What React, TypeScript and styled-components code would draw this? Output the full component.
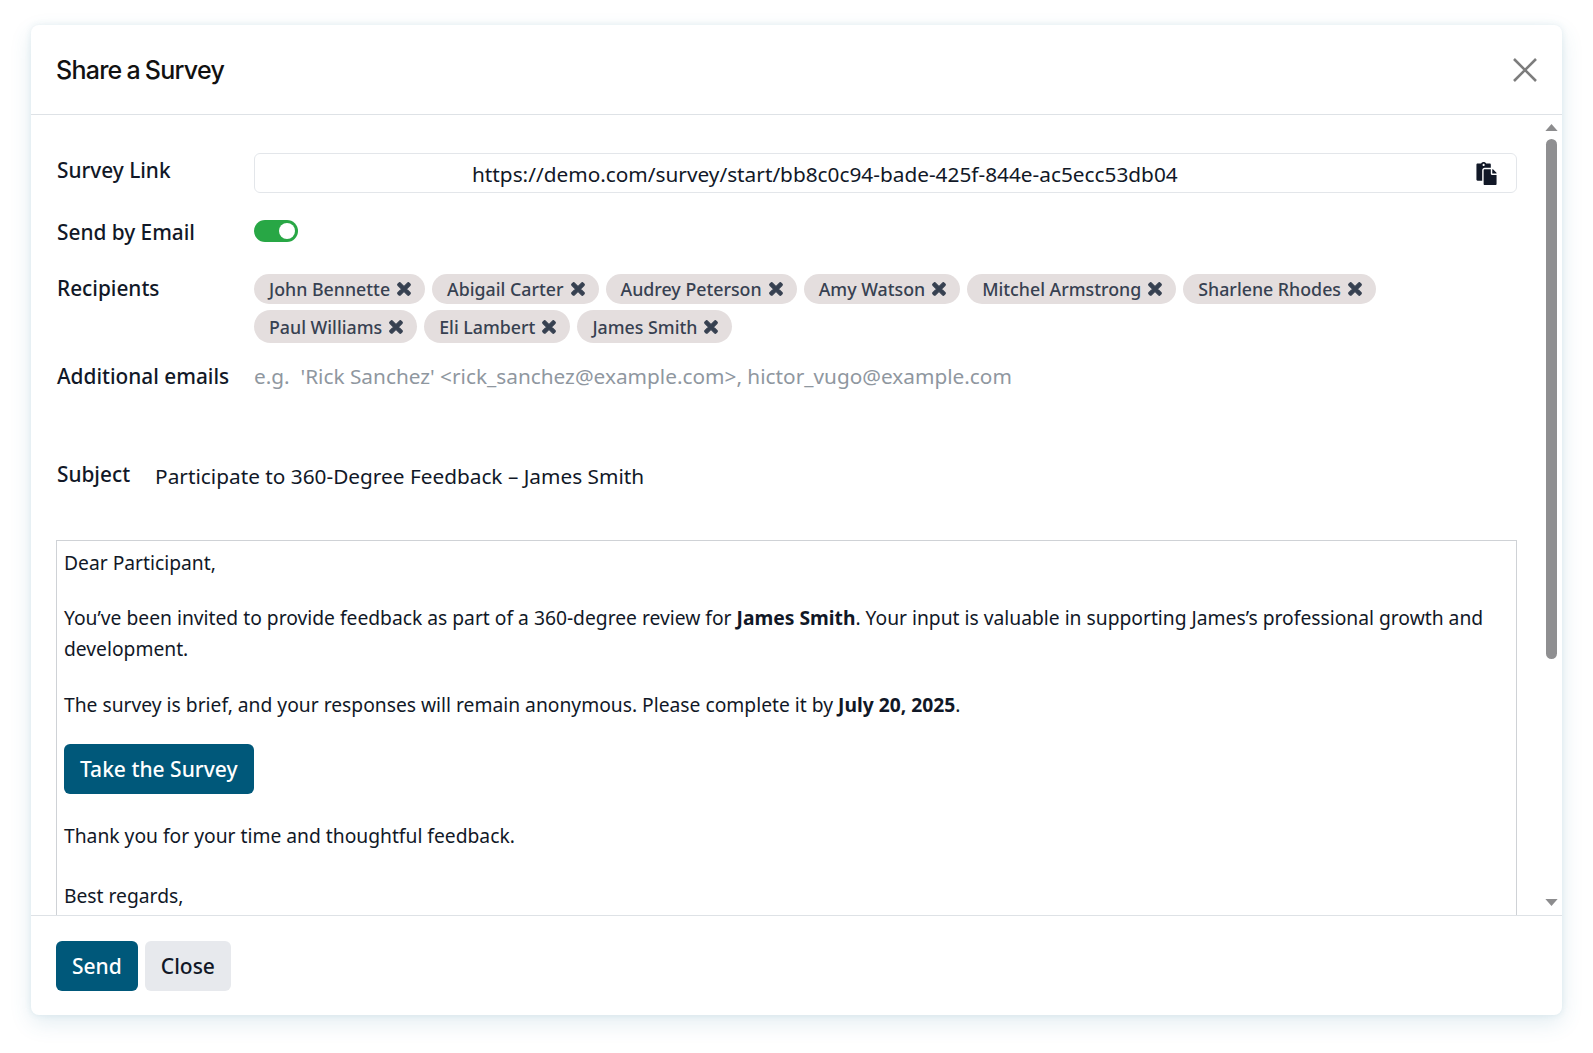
import React from "react";
import styled, { createGlobalStyle } from "styled-components";
import { FaPaste, FaTimes } from "react-icons/fa";

const Global = createGlobalStyle`
  html, body { margin: 0; padding: 0; background: #fff; }
  body { width: 1593px; height: 1053px; overflow: hidden; font-family: "Noto Sans", "Liberation Sans", sans-serif; color: #111827; }
`;

const Page = styled.div`
  box-sizing: border-box;
  width: 1593px;
  height: 1053px;
  padding: 25px 31px 38px 31px;
`;

const Dialog = styled.section`
  height: 990px;
  display: flex;
  flex-direction: column;
  background: #fff;
  border-radius: 8px;
  box-shadow: 0 8px 22px rgba(60, 130, 160, 0.14), 0 0 6px rgba(60, 130, 160, 0.12);
  overflow: hidden;
`;

const Header = styled.header`
  box-sizing: border-box;
  height: 90px;
  flex: none;
  padding: 0 25px;
  display: flex;
  align-items: center;
  justify-content: space-between;
  border-bottom: 1px solid #dee2e6;
`;

const Title = styled.h4`
  margin: 0;
  font-family: Inter, "Liberation Sans", sans-serif;
  font-size: 25px;
  font-weight: 500;
  letter-spacing: -0.75px;
  word-spacing: -1px;
  color: #111;
`;

const CloseIcon = styled.svg`
  width: 24px;
  height: 24px;
  stroke: #7d7d7d;
  stroke-width: 2.6;
  fill: none;
  display: block;
`;

const Middle = styled.div`
  flex: 1;
  min-height: 0;
  display: flex;
`;

const Content = styled.div`
  flex: 1;
  min-width: 0;
  overflow: hidden;
  padding: 38px 0 0 25px;
`;

const Rail = styled.div`
  width: 45px;
  flex: none;
  box-sizing: border-box;
  padding: 9px 5px 9px 0;
  display: flex;
  flex-direction: column;
  align-items: flex-end;
`;

const RailArrow = styled.svg`
  width: 13px;
  height: 7px;
  fill: #8c8c8e;
  display: block;
  flex: none;
  margin-right: -1px;
`;

const Thumb = styled.div`
  width: 11px;
  height: 520px;
  margin-top: 8px;
  border-radius: 6px;
  background: #8f8f91;
  flex: none;
`;

const RailSpacer = styled.div`
  flex: 1;
`;

const FormRow = styled.div<{ $h: number }>`
  display: grid;
  grid-template-columns: 198px 1fr;
  height: ${(p) => p.$h}px;
`;

const Label = styled.label<{ $drop?: number }>`
  padding: ${(p) => p.$drop ?? 0}px 0 0 1px;
  font-size: 20.8px;
  font-weight: 500;
  line-height: 30px;
  color: #111827;
  white-space: nowrap;
`;

const LinkBox = styled.div`
  box-sizing: border-box;
  height: 40px;
  border: 1px solid #e3e6ea;
  border-radius: 6px;
  display: flex;
  align-items: center;
  padding: 0 18px 0 217px;
  font-size: 20.8px;
  color: #111827;
`;

const LinkText = styled.span`
  flex: 1;
  padding-top: 2px;
`;

const Toggle = styled.div`
  position: relative;
  width: 44px;
  height: 22px;
  margin-top: 3px;
  border-radius: 11px;
  background: #28a745;
`;

const Knob = styled.span`
  position: absolute;
  right: 3px;
  top: 3px;
  width: 16px;
  height: 16px;
  border-radius: 50%;
  background: #fff;
`;

const Chips = styled.div`
  display: flex;
  flex-wrap: wrap;
  align-content: flex-start;
  gap: 6px 7px;
  margin-top: 1px;
`;

const Chip = styled.span<{ $tall?: boolean }>`
  display: inline-flex;
  align-items: center;
  gap: 7px;
  height: ${(p) => (p.$tall ? 33 : 30)}px;
  padding: 0 14px 0 15px;
  border-radius: 17px;
  background: #e4dede;
  font-size: 17.8px;
  font-weight: 500;
  color: #374151;
  white-space: nowrap;
  svg {
    width: 14px;
    height: 18px;
    color: #374151;
    flex: none;
    stroke-width: 36;
  }
`;

const Placeholder = styled.div`
  font-size: 20.8px;
  line-height: 30px;
  color: #8f979f;
  white-space: pre;
`;

const SubjectRow = styled.div`
  display: flex;
  gap: 25px;
  align-items: flex-start;
  margin: 0 0 51px;
  height: 30px;
`;

const SubjectValue = styled.div`
  padding-top: 2px;
  font-size: 20.8px;
  color: #111827;
  line-height: 30px;
`;

const MailBox = styled.div`
  box-sizing: border-box;
  height: 520px;
  border: 1px solid #cfd2d6;
  border-bottom: none;
  padding: 6px 7px 0;
  font-size: 19.25px;
  line-height: 31px;
  color: #111827;
`;

const Para = styled.p<{ $after?: number }>`
  margin: 0 0 ${(p) => p.$after ?? 24.5}px;
`;

const MailButton = styled.a`
  display: block;
  width: fit-content;
  height: 50px;
  line-height: 50px;
  padding: 0 16px;
  background: #00587a;
  border-radius: 6px;
  color: #fff;
  font-size: 21px;
  font-weight: 500;
  margin-bottom: 26px;
`;

const Footer = styled.footer`
  box-sizing: border-box;
  flex: none;
  height: 100px;
  border-top: 1px solid #dee2e6;
  padding: 25px 25px 0;
  display: flex;
  gap: 7px;
  align-items: flex-start;
`;

const Button = styled.button<{ $primary?: boolean }>`
  height: 50px;
  padding: 0 16px;
  border: none;
  border-radius: 6px;
  font-family: inherit;
  font-size: 21px;
  font-weight: 500;
  background: ${(p) => (p.$primary ? "#00587a" : "#e7e9ed")};
  color: ${(p) => (p.$primary ? "#fff" : "#111827")};
`;

const row1 = ["John Bennette", "Abigail Carter", "Audrey Peterson", "Amy Watson", "Mitchel Armstrong", "Sharlene Rhodes"];
const row2 = ["Paul Williams", "Eli Lambert", "James Smith"];

export default function App() {
  return (
    <Page>
      <Global />
      <Dialog>
        <Header>
          <Title>Share a Survey</Title>
          <CloseIcon viewBox="0 0 24 24"><path d="M1 1 L23 23 M23 1 L1 23" /></CloseIcon>
        </Header>
        <Middle>
          <Content>
            <FormRow $h={64}>
              <Label $drop={2}>Survey Link</Label>
              <LinkBox>
                <LinkText>https://demo.com/survey/start/bb8c0c94-bade-425f-844e-ac5ecc53db04</LinkText>
                <FaPaste size={23} color="#111827" />
              </LinkBox>
            </FormRow>
            <FormRow $h={56}>
              <Label>Send by Email</Label>
              <Toggle><Knob /></Toggle>
            </FormRow>
            <FormRow $h={88}>
              <Label>Recipients</Label>
              <Chips>
                {row1.map((n) => <Chip key={n}>{n}<FaTimes /></Chip>)}
                {row2.map((n) => <Chip key={n} $tall>{n}<FaTimes /></Chip>)}
              </Chips>
            </FormRow>
            <FormRow $h={98}>
              <Label>Additional emails</Label>
              <Placeholder>e.g.  'Rick Sanchez' &lt;rick_sanchez@example.com&gt;, hictor_vugo@example.com</Placeholder>
            </FormRow>
            <SubjectRow>
              <Label>Subject</Label>
              <SubjectValue>Participate to 360-Degree Feedback – James Smith</SubjectValue>
            </SubjectRow>
            <MailBox>
              <Para $after={24}>Dear Participant,</Para>
              <Para>You’ve been invited to provide feedback as part of a 360-degree review for <b>James Smith</b>. Your input is valuable in supporting James’s professional growth and development.</Para>
              <Para>The survey is brief, and your responses will remain anonymous. Please complete it by <b>July 20, 2025</b>.</Para>
              <MailButton>Take the Survey</MailButton>
              <Para $after={29}>Thank you for your time and thoughtful feedback.</Para>
              <Para>Best regards,</Para>
            </MailBox>
          </Content>
          <Rail>
            <RailArrow viewBox="0 0 14 8"><path d="M7 0 L14 8 L0 8 Z" /></RailArrow>
            <Thumb />
            <RailSpacer />
            <RailArrow viewBox="0 0 14 8"><path d="M0 0 L14 0 L7 8 Z" /></RailArrow>
          </Rail>
        </Middle>
        <Footer>
          <Button $primary>Send</Button>
          <Button>Close</Button>
        </Footer>
      </Dialog>
    </Page>
  );
}
